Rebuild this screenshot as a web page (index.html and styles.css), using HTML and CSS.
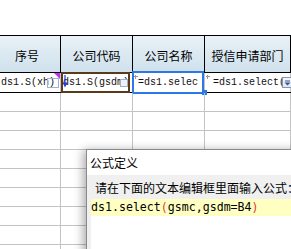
FILE: index.html
```html
<!DOCTYPE html>
<html>
<head>
<meta charset="utf-8">
<link rel="stylesheet" href="styles.css">
</head>
<body>
<div class="page">
  <div class="spacer"></div>
  <div class="sheet">
    <div class="row head">
      <div class="c ca"><span class="htext pad-a">序号</span></div>
      <div class="c cb"><span class="htext">公司代码</span></div>
      <div class="c cc"><span class="htext">公司名称</span></div>
      <div class="c cd"><span class="htext">授信申请部门</span></div>
    </div>
    <div class="row data">
      <div class="c ca">
        <span class="val val-a">ds1.S(xh)</span>
        <span class="mini-box box-a"></span>
        <span class="corner-tri"></span>
      </div>
      <div class="c cb">
        <span class="val val-b">ds1.S(gsdm)</span>
        <svg class="down-arrow" width="6" height="13" viewBox="0 0 6 13"><path d="M3 0V9" stroke="#1c3fd6" stroke-width="1.2"/><path d="M0.5 7.5H5.5L3 12.5Z" fill="#1c3fd6"/></svg>
        <span class="mini-box box-b"></span>
        <span class="sel-brown"></span>
      </div>
      <div class="c cc">
        <svg class="plus plus-c" width="4" height="4" viewBox="0 0 4 4"><path d="M0 1.5H4M1.5 0V4" stroke="#9a9a9a" stroke-width="1"/></svg>
        <span class="val val-c">=ds1.selec</span>
        <span class="sel-blue"></span>
        <span class="handle"></span>
      </div>
      <div class="c cd">
        <svg class="plus plus-d" width="4" height="4" viewBox="0 0 4 4"><path d="M0 1.5H4M1.5 0V4" stroke="#9a9a9a" stroke-width="1"/></svg>
        <span class="val val-d">=ds1.select(</span>
        <span class="dropdown"><svg width="9" height="9" viewBox="0 0 9 9"><path d="M2 3H7" stroke="#3a5488" stroke-width="1"/><path d="M1.5 4.5H7.5L4.5 7.5Z" fill="#3a5488"/></svg></span>
      </div>
    </div>
    <div class="row empty"><div class="c ca"></div><div class="c cb"></div><div class="c cc"></div><div class="c cd"></div></div>
    <div class="row empty"><div class="c ca"></div><div class="c cb"></div><div class="c cc"></div><div class="c cd"></div></div>
    <div class="row empty"><div class="c ca"></div><div class="c cb"></div><div class="c cc"></div><div class="c cd"></div></div>
    <div class="row empty"><div class="c ca"></div><div class="c cb"></div><div class="c cc"></div><div class="c cd"></div></div>
    <div class="row empty"><div class="c ca"></div><div class="c cb"></div><div class="c cc"></div><div class="c cd"></div></div>
    <div class="row empty"><div class="c ca"></div><div class="c cb"></div><div class="c cc"></div><div class="c cd"></div></div>
    <div class="row empty"><div class="c ca"></div><div class="c cb"></div><div class="c cc"></div><div class="c cd"></div></div>
    <div class="row empty"><div class="c ca"></div><div class="c cb"></div><div class="c cc"></div><div class="c cd"></div></div>
    <div class="row empty"><div class="c ca"></div><div class="c cb"></div><div class="c cc"></div><div class="c cd"></div></div>
  </div>

  <div class="dialog">
    <div class="dlg-title">公式定义</div>
    <div class="dlg-body">
      <div class="prompt">请在下面的文本编辑框里面输入公式：</div>
      <div class="editor">
        <div class="code-line">ds1.select<span class="paren">(</span>gsmc,gsdm=B4<span class="paren">)</span></div>
      </div>
    </div>
  </div>
</div>
</body>
</html>
```

FILE: styles.css
```css
* { box-sizing: border-box; }
html, body { margin: 0; padding: 0; }
body {
  width: 291px;
  height: 249px;
  overflow: hidden;
  background: #fff;
  font-family: "Noto Sans CJK SC", sans-serif;
  color: #000;
}
.page {
  position: relative;
  width: 291px;
  height: 249px;
  overflow: hidden;
}
.spacer { height: 35px; }

.row { display: flex; }
.c { flex: none; position: relative; }
.ca { width: 61px; }
.cb { width: 72px; }
.cc { width: 72px; }
.cd { flex: 1; }

/* header */
.head {
  height: 38px;
  border-top: 1px solid #000;
  border-bottom: 1px solid #000;
  background: linear-gradient(#e9f1f7, #cfe1ec);
}
.head .c {
  border-right: 1px solid #000;
  display: flex;
  align-items: center;
  justify-content: center;
  padding-top: 3px;
}
.htext {
  font-size: 12px;
  line-height: 14px;
  white-space: nowrap;
}
.pad-a { margin-right: 6px; }

/* data row */
.data {
  height: 20px;
  border-bottom: 1px solid #000;
}
.data .c {
  border-right: 1px solid #c3c3c3;
  height: 19px;
}
.val {
  display: block;
  font-family: "Liberation Mono", monospace;
  font-size: 10px;
  line-height: 19px;
  white-space: nowrap;
  color: #111;
}
.val-a { padding-left: 1px; }
.val-b { padding-left: 2px; }
.val-c { padding-left: 5px; }
.val-d { padding-left: 8px; }

.mini-box {
  position: absolute;
  border: 1px solid #9fb1ca;
}
.box-a { left: 47px; top: 5px; width: 12px; height: 10px; }
.box-b { left: 59px; top: 6px; width: 8px; height: 8px; background: #eef2f8; }
.corner-tri {
  position: absolute;
  top: 0;
  right: 0;
  width: 0;
  height: 0;
  border-top: 6px solid #b935ee;
  border-left: 6px solid transparent;
}
.down-arrow { position: absolute; left: 1px; top: 2px; }
.sel-brown {
  position: absolute;
  left: 0;
  right: 2px;
  top: -1px;
  bottom: -1px;
  border: 2px solid #5a3a1c;
}
.plus { position: absolute; top: 2px; }
.plus-c { left: 1px; }
.plus-d { left: 1px; }
.sel-blue {
  position: absolute;
  left: -1px;
  right: 0;
  top: -2px;
  bottom: -2px;
  border: 2px solid #2b79e4;
}
.handle {
  position: absolute;
  right: -3px;
  bottom: -3px;
  width: 5px;
  height: 5px;
  background: #2b79e4;
}
.dropdown {
  position: absolute;
  left: 77px;
  top: 4px;
  width: 11px;
  height: 11px;
  border: 1px solid #8396b8;
  background: linear-gradient(#f4f7fc, #dde6f3);
  display: flex;
  align-items: center;
  justify-content: center;
}

/* empty rows */
.empty {
  height: 19px;
  border-bottom: 1px solid #c3c3c3;
}
.empty .c {
  border-right: 1px solid #c3c3c3;
  height: 18px;
}

/* dialog */
.dialog {
  position: absolute;
  left: 86px;
  top: 149px;
  width: 230px;
  height: 120px;
  border: 1px solid #8a8a8a;
  background: #f0f0f0;
  box-shadow: -3px 1px 9px rgba(0, 0, 0, 0.32);
  display: flex;
  flex-direction: column;
}
.dlg-title {
  flex: none;
  height: 25px;
  background: #fff;
  font-size: 12px;
  line-height: 25px;
  padding-left: 3px;
  white-space: nowrap;
}
.dlg-body {
  flex: 1;
  padding: 6px 0 0 4px;
}
.prompt {
  font-size: 12px;
  line-height: 14px;
  padding-left: 4px;
  white-space: nowrap;
}
.editor {
  margin-top: 4px;
  height: 100px;
  background: #fff;
}
.code-line {
  height: 17px;
  line-height: 17px;
  background: #ffffc2;
  font-family: "DejaVu Sans Mono", monospace;
  font-size: 11.6px;
  white-space: nowrap;
  color: #000;
}
.paren { color: #e8332d; }
```
